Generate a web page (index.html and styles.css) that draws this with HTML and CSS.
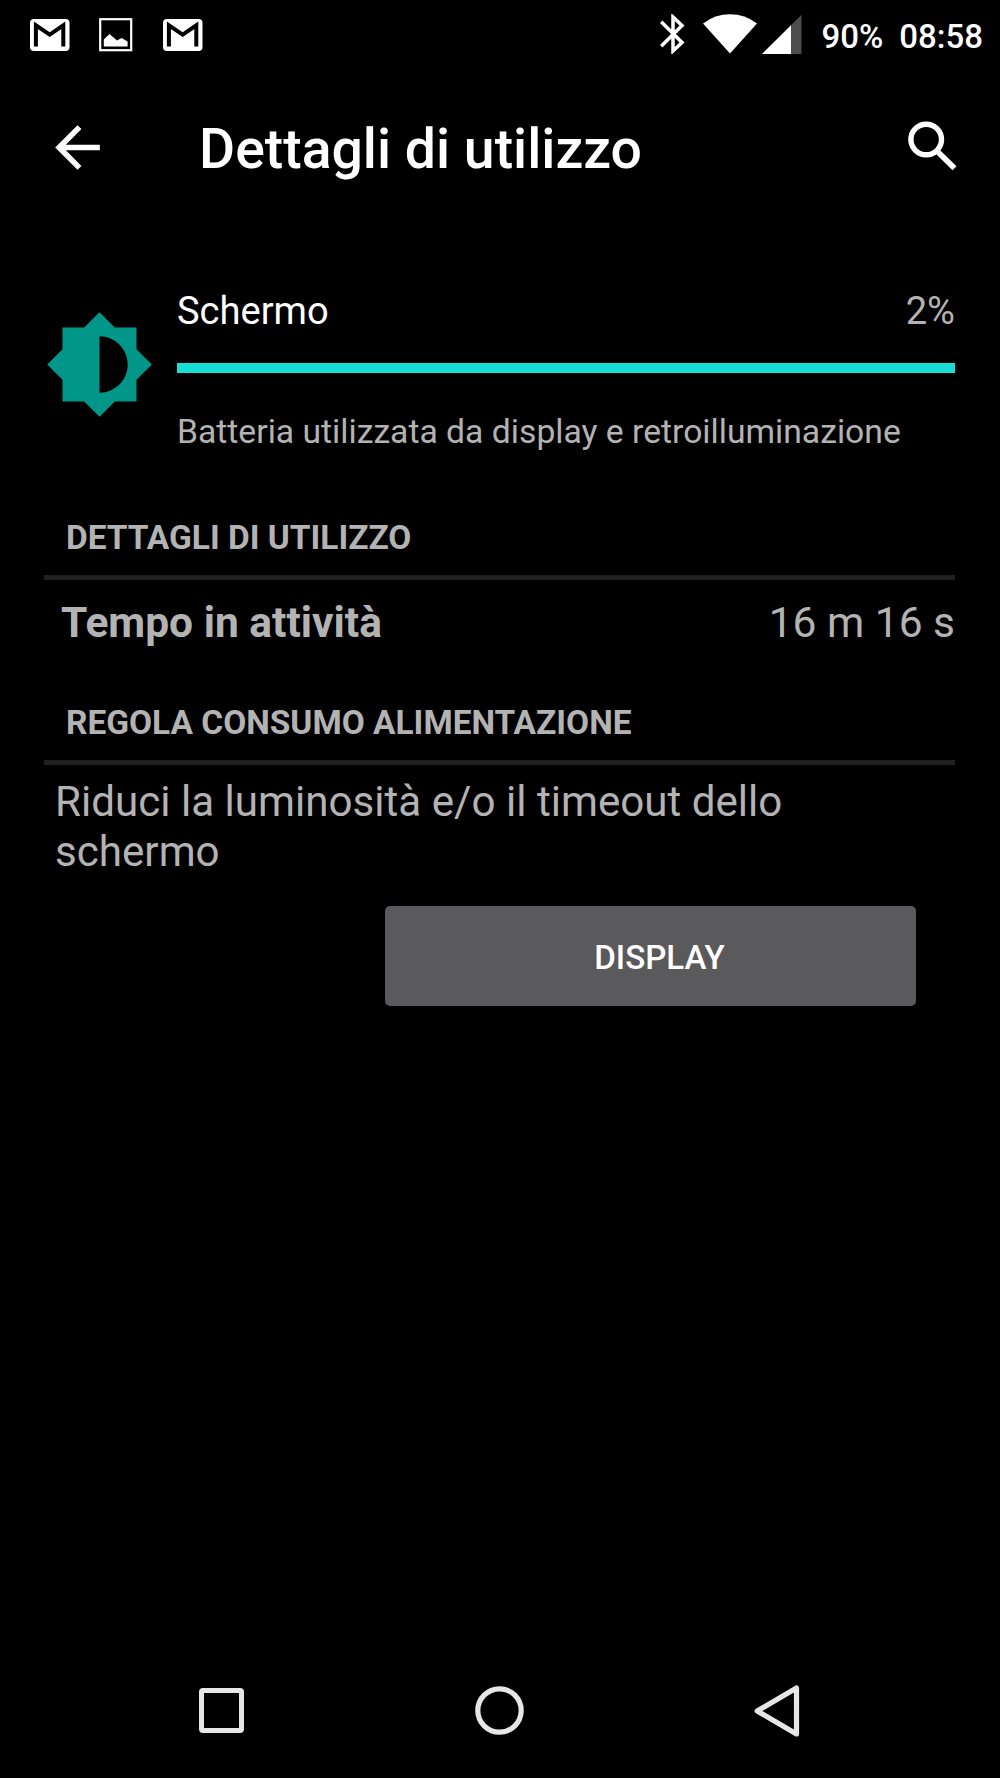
FILE: index.html
```html
<!DOCTYPE html>
<html lang="it">
<head>
<meta charset="utf-8">
<title>Dettagli di utilizzo</title>
<link rel="stylesheet" href="styles.css">
</head>
<body>
<div class="screen">
  <header class="status-bar">
    <div class="notifications">
      <svg class="gmail" width="40" height="33" viewBox="0 0 40 33"><rect width="39.5" height="32" rx="4" fill="#fff"/><path d="M5.9 27.5V6.3L19.7 15.6L33.3 6.3V27.5" fill="none" stroke="#000" stroke-width="4"/></svg>
      <svg class="picture" width="34" height="34" viewBox="0 0 34 34"><rect x="1.2" y="1.2" width="31" height="31" fill="none" stroke="#fff" stroke-width="2.2"/><path d="M4.8 28.5V21.5L10.5 16L18 22.5L22.5 20L28.6 23.5V28.5Z" fill="#fff"/></svg>
      <svg class="gmail" width="40" height="33" viewBox="0 0 40 33"><rect width="39.5" height="32" rx="4" fill="#fff"/><path d="M5.9 27.5V6.3L19.7 15.6L33.3 6.3V27.5" fill="none" stroke="#000" stroke-width="4"/></svg>
    </div>
    <div class="system">
      <svg class="bluetooth" width="25" height="40" viewBox="0 0 25 40"><path d="M1.2 7.8L22 28.5L13 37V3L22 11.5L1.2 32.2" fill="none" stroke="#fff" stroke-width="3.5"/></svg>
      <svg class="wifi" width="54" height="40" viewBox="0 0 54 40"><path d="M0 9.5Q12 .3 27 .3T54 9.5L27 39.6Z" fill="#fff"/></svg>
      <svg class="signal" width="40" height="40" viewBox="0 0 40 40"><path d="M0 40L39.5 .8V40Z" fill="#4d4d4d"/><path d="M0 40L29 11.2V40Z" fill="#fff"/></svg>
      <span class="battery">90%</span>
      <span class="clock">08:58</span>
    </div>
  </header>

  <div class="app-bar">
    <svg class="back" width="67" height="67" viewBox="0 0 24 24"><path d="M20 11H7.83l5.59-5.59L12 4l-8 8 8 8 1.41-1.41L7.83 13H20v-2z" fill="#fff"/></svg>
    <h1 class="title">Dettagli di utilizzo</h1>
    <svg class="search" width="50" height="50" viewBox="0 0 50 50"><circle cx="18.2" cy="18.5" r="15.3" fill="none" stroke="#fff" stroke-width="5.4"/><path d="M30.2 31.2L46.5 47.2" stroke="#fff" stroke-width="5.6"/></svg>
  </div>

  <main class="content">
    <section class="entry">
      <svg class="brightness" width="111" height="111" viewBox="0 0 24 24"><path d="M20 15.31L23.31 12 20 8.69V4h-4.69L12 .69 8.69 4H4v4.69L.69 12 4 15.31V20h4.69L12 23.31 15.31 20H20v-4.69zM12 18.1V5.9c3.35 0 6.1 2.75 6.1 6.1s-2.75 6.1-6.1 6.1z" fill="#009688"/></svg>
      <div class="usage">
        <div class="usage-head"><span class="name">Schermo</span><span class="percent">2%</span></div>
        <div class="meter"></div>
        <p class="summary">Batteria utilizzata da display e retroilluminazione</p>
      </div>
    </section>

    <h2 class="section-title details">DETTAGLI DI UTILIZZO</h2>
    <div class="detail"><span class="label">Tempo in attività</span><span class="value">16 m 16 s</span></div>

    <h2 class="section-title control">REGOLA CONSUMO ALIMENTAZIONE</h2>
    <p class="advice">Riduci la luminosità e/o il timeout dello schermo</p>
    <button class="action">DISPLAY</button>
  </main>

  <nav class="nav-bar">
    <svg width="45" height="45" viewBox="0 0 45 45"><rect x="2.5" y="2.5" width="40" height="40" rx="1.5" fill="none" stroke="#e6e6e6" stroke-width="5"/></svg>
    <svg class="home" width="49" height="49" viewBox="0 0 49 49"><circle cx="24.5" cy="24.5" r="21.7" fill="none" stroke="#e6e6e6" stroke-width="5.2"/></svg>
    <svg width="46" height="52" viewBox="0 0 46 52"><path d="M3.2 26L42.5 3V49Z" fill="none" stroke="#e6e6e6" stroke-width="5.2" stroke-linejoin="round"/></svg>
  </nav>
</div>
</body>
</html>
```
FILE: styles.css
```css
* { box-sizing: border-box; margin: 0; padding: 0; }
body { background: #000; color: #b3b3b3; font-family: Roboto, "Noto Sans", sans-serif; }
svg { display: block; flex: none; }
.screen { width: 1000px; height: 1778px; display: flex; flex-direction: column; overflow: hidden; }

.status-bar { height: 73px; padding: 0 17px 0 30px; display: flex; justify-content: space-between; color: #fff; font-size: 33px; font-weight: 500; line-height: 73px; }
.notifications, .system { display: flex; }
.gmail { margin-top: 19px; }
.picture { margin: 18px 30px 0 29px; }
.bluetooth { margin: 14px 18px 0 0; }
.wifi { margin: 14px 5px 0 0; }
.signal { margin: 14px 19px 0 0; }
.battery { margin-right: 16px; }

.app-bar { height: 152px; padding: 0 42px 0 44px; display: flex; align-items: center; }
.back { margin-top: -4px; }
.title { flex: 1; margin-left: 88px; padding-top: 2px; color: #fff; font-size: 55.35px; font-weight: 500; line-height: 152px; }
.search { margin-top: -6px; }

.content { flex: 1; padding: 61px 45px 0 44px; }
.entry { display: flex; gap: 22px; }
.brightness { margin-top: 23px; }
.usage { flex: 1; }
.usage-head { display: flex; justify-content: space-between; font-size: 38.1px; line-height: 50px; }
.name { color: #fff; }
.meter { height: 10px; margin-top: 27px; background: #18dfd5; }
.summary { margin-top: 39px; font-size: 33.7px; line-height: 40px; }

.section-title { padding-left: 22px; height: 57px; border-bottom: 5px solid #202020; font-size: 33.45px; font-weight: 700; line-height: 30px; }
.details { margin-top: 71px; }
.detail { display: flex; justify-content: space-between; padding-left: 17px; height: 128px; font-size: 42.5px; line-height: 86px; }
.label { font-weight: 700; }
.advice { width: 760px; padding: 12px 0 0 11px; font-size: 42.15px; line-height: 50px; }
.action { display: block; width: 531px; height: 100px; margin: 29px 39px 0 auto; padding: 4px 0 0 18px; border: 0; border-radius: 5px; background: #5a5a5c; color: #fff; font: 500 33.1px/96px Roboto, "Noto Sans", sans-serif; }

.nav-bar { height: 135px; padding: 0 200px 0 199px; display: flex; justify-content: space-between; align-items: center; }
.home { margin-left: 1px; }
```
